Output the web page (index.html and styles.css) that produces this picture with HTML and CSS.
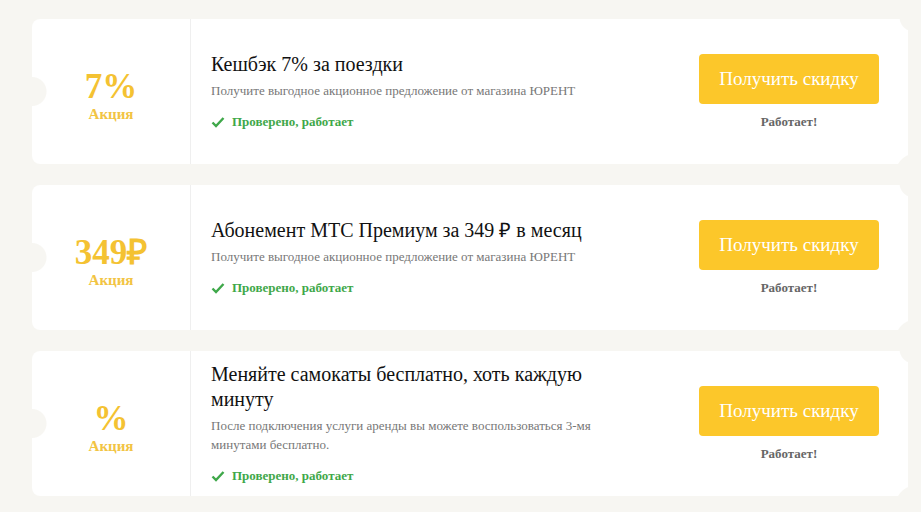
FILE: index.html
```html
<!DOCTYPE html>
<html lang="ru">

<head>
    <meta charset="UTF-8">
    <meta name="viewport" content="width=device-width, initial-scale=1.0">
    <title>Промокоды ЮРЕНТ</title>
    <link rel="stylesheet" href="styles.css">
</head>

<body>
    <div class="coupons">
        <div class="coupon">
            <div class="coupon-value">
                <div class="amount">7%</div>
                <div class="label">Акция</div>
            </div>
            <div class="coupon-info">
                <div class="title">Кешбэк 7% за поездки</div>
                <div class="desc">Получите выгодное акционное предложение от магазина ЮРЕНТ</div>
                <div class="checked">
                    <svg class="check" viewBox="0 0 14 12" width="14" height="12">
                        <path d="M1.5 6.5 L5 10 L12.5 2" fill="none" stroke="#3fa84a" stroke-width="2.4" />
                    </svg>
                    Проверено, работает
                </div>
            </div>
            <div class="coupon-action">
                <button class="btn">Получить скидку</button>
                <div class="status">Работает!</div>
            </div>
        </div>

        <div class="coupon">
            <div class="coupon-value">
                <div class="amount">349₽</div>
                <div class="label">Акция</div>
            </div>
            <div class="coupon-info">
                <div class="title">Абонемент МТС Премиум за 349 ₽ в месяц</div>
                <div class="desc">Получите выгодное акционное предложение от магазина ЮРЕНТ</div>
                <div class="checked">
                    <svg class="check" viewBox="0 0 14 12" width="14" height="12">
                        <path d="M1.5 6.5 L5 10 L12.5 2" fill="none" stroke="#3fa84a" stroke-width="2.4" />
                    </svg>
                    Проверено, работает
                </div>
            </div>
            <div class="coupon-action">
                <button class="btn">Получить скидку</button>
                <div class="status">Работает!</div>
            </div>
        </div>

        <div class="coupon">
            <div class="coupon-value">
                <div class="amount">%</div>
                <div class="label">Акция</div>
            </div>
            <div class="coupon-info">
                <div class="title">Меняйте самокаты бесплатно, хоть каждую минуту</div>
                <div class="desc">После подключения услуги аренды вы можете воспользоваться 3-мя минутами бесплатно.</div>
                <div class="checked">
                    <svg class="check" viewBox="0 0 14 12" width="14" height="12">
                        <path d="M1.5 6.5 L5 10 L12.5 2" fill="none" stroke="#3fa84a" stroke-width="2.4" />
                    </svg>
                    Проверено, работает
                </div>
            </div>
            <div class="coupon-action">
                <button class="btn">Получить скидку</button>
                <div class="status">Работает!</div>
            </div>
        </div>
    </div>
</body>

</html>
```

FILE: styles.css
```css
body {
    margin: 0;
    background-color: #f7f6f2;
    font-family: "Liberation Serif", "Times New Roman", serif;
    color: #111;
}

.coupons {
    display: flex;
    flex-direction: column;
    gap: 21px;
    padding: 19px 13px 0 32px;
}

.coupon {
    display: flex;
    height: 145px;
    border-radius: 8px;
    background:
        radial-gradient(circle at 0 50%, #f7f6f2 14px, transparent 15px),
        radial-gradient(circle at calc(100% + 6px) -2px, #f7f6f2 14px, transparent 15px),
        radial-gradient(circle at calc(100% + 8px) calc(100% + 10px), #f7f6f2 20px, transparent 21px),
        #fff;
}

.coupon-value {
    width: 159px;
    flex-shrink: 0;
    display: flex;
    flex-direction: column;
    align-items: center;
    justify-content: center;
    border-right: 1px solid #efefef;
    color: #f4c232;
    font-weight: bold;
    padding-top: 10px;
    box-sizing: border-box;
}

.amount {
    font-size: 35px;
    line-height: 35px;
}

.label {
    font-size: 15px;
    line-height: 20px;
    color: #f2c443;
}

.coupon-info {
    flex: 1;
    display: flex;
    flex-direction: column;
    justify-content: center;
    padding: 0 20px;
}

.title {
    font-size: 20px;
    line-height: 25px;
    max-width: 400px;
    margin-bottom: 4px;
}

.desc {
    font-size: 13px;
    line-height: 19px;
    color: #777;
    max-width: 390px;
    margin-bottom: 13px;
}

.checked {
    display: flex;
    align-items: center;
    gap: 7px;
    font-size: 13px;
    font-weight: bold;
    color: #3fa84a;
    line-height: 18px;
}

.coupon-action {
    width: 180px;
    padding: 1px 29px 0 0;
    display: flex;
    flex-direction: column;
    align-items: center;
    justify-content: center;
    gap: 9px;
}

.btn {
    width: 180px;
    height: 50px;
    border: none;
    border-radius: 4px;
    background-color: #fcc72a;
    color: #fff;
    font-family: "Liberation Serif", "Times New Roman", serif;
    font-size: 19px;
    cursor: pointer;
}

.status {
    font-size: 13px;
    font-weight: bold;
    color: #666;
    line-height: 18px;
}
```
